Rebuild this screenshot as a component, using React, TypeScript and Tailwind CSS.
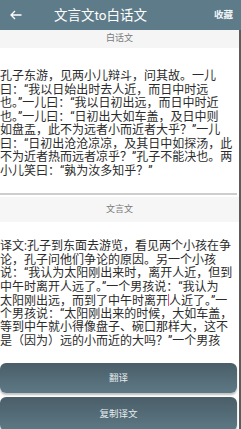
import React from "react";

const font = { fontFamily: '"Roboto", "Noto Sans CJK SC", sans-serif' };

const baihua = [
  "孔子东游，见两小儿辩斗，问其故。一儿",
  "曰：“我以日始出时去人近，而日中时远",
  "也。”一儿曰：“我以日初出远，而日中时近",
  "也。”一儿曰：“日初出大如车盖，及日中则",
  "如盘盂，此不为远者小而近者大乎？”一儿",
  "曰：“日初出沧沧凉凉，及其日中如探汤，此",
  "不为近者热而远者凉乎？”孔子不能决也。两",
  "小儿笑曰：“孰为汝多知乎？”",
];

const yiwen = [
  "译文:孔子到东面去游览，看见两个小孩在争",
  "论，孔子问他们争论的原因。另一个小孩",
  "说：“我认为太阳刚出来时，离开人近，但到",
  "中午时离开人远了。”一个男孩说：“我认为",
  "CURSOR",
  "个男孩说：“太阳刚出来的时候，大如车盖，",
  "等到中午就小得像盘子、碗口那样大，这不",
  "是（因为）远的小而近的大吗？”一个男孩",
];

function Line({ text }: { text: string }) {
  if (text === "CURSOR") {
    return (
      <div className="whitespace-nowrap h-[13.5px] leading-[13.5px]">
        太阳刚出远，而到了中午时离开
        <span className="inline-block w-px h-[12px] bg-[#e8508a] align-[-1px]" />
        人近了。”一
      </div>
    );
  }
  return <div className="whitespace-nowrap h-[13.5px] leading-[13.5px]">{text}</div>;
}

export default function App() {
  return (
    <div className="w-[241px] h-[429px] overflow-hidden bg-white flex flex-col" style={font}>
      <div className="h-[30px] bg-[#5e7b89] flex items-center shrink-0">
        <svg width="12" height="10" viewBox="0 0 12 10" className="ml-[10px]" fill="none" stroke="#ffffff" strokeWidth="1.3">
          <path d="M11.5 5H1.2M5 1L1 5l4 4" />
        </svg>
        <span className="ml-[32px] text-[13.5px] text-white">文言文to白话文</span>
        <span className="ml-auto mr-[8px] text-[9.5px] font-bold text-[#f2f5f6]">收藏</span>
      </div>
      <div className="flex-1 flex">
        <div className="flex-1 flex flex-col">
          <div className="h-[18px] bg-[#f5f5f5] flex items-center justify-center text-[9px] text-[#7a7a7a] shrink-0">
            白话文
          </div>
          <div className="h-[145px] pt-[22px] text-[12px] text-[#2b2b2b] shrink-0">
            {baihua.map((t, i) => (
              <Line key={i} text={t} />
            ))}
          </div>
          <div className="h-[2px] w-[237px] bg-[#cdcdcd] shrink-0" />
          <div className="mt-[2px] h-[25px] bg-[#f6f6f6] flex items-center justify-center text-[9px] text-[#7a7a7a] shrink-0">
            文言文
          </div>
          <div className="pt-[18px] text-[12px] text-[#2b2b2b]">
            {yiwen.map((t, i) => (
              <Line key={i} text={t} />
            ))}
          </div>
          <div className="mt-[15px] flex flex-col gap-[4px] w-[237px]">
            <div className="h-[30px] rounded-[6px] bg-gradient-to-b from-[#4a5e69] to-[#5d7985] shadow-[0_2px_2px_rgba(0,0,0,0.25)] flex items-center justify-center text-[9.5px] text-[#e6ecee]">
              翻译
            </div>
            <div className="h-[34px] rounded-[6px] bg-gradient-to-b from-[#4a5e69] to-[#5d7985] shadow-[0_2px_2px_rgba(0,0,0,0.25)] flex items-center justify-center text-[9.5px] text-[#e6ecee]">
              复制译文
            </div>
          </div>
        </div>
        <div className="w-[2px] bg-[#5c5c5c]" />
      </div>
    </div>
  );
}
